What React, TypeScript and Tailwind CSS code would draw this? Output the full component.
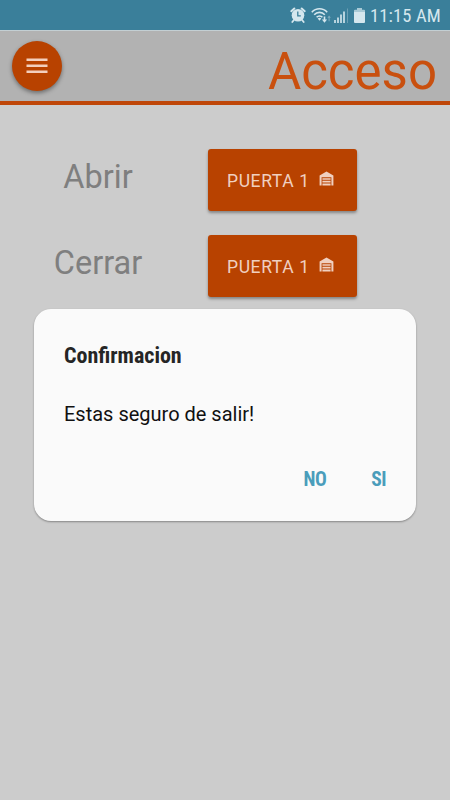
import type { ReactNode } from 'react'

const CONDENSED =
  "font-['Roboto_Condensed','Roboto','Liberation_Sans_Narrow',sans-serif] [font-stretch:75%]"

function AlarmIcon() {
  return (
    <svg width="16" height="16" viewBox="0 0 16 16" fill="none">
      <path
        d="M3.9 13l-1.6 2M12.1 13l1.6 2"
        stroke="#d5e7ee"
        strokeWidth="1.8"
        strokeLinecap="round"
      />
      <path
        d="M1.3 4.2l3-2.7M14.7 4.2l-3-2.7"
        stroke="#d5e7ee"
        strokeWidth="2"
        strokeLinecap="round"
      />
      <circle cx="8" cy="8.2" r="6.3" fill="#d5e7ee" />
      <path d="M7.8 4.6v4.2h3" stroke="#3a7f9a" strokeWidth="1.3" />
    </svg>
  )
}

function WifiIcon() {
  return (
    <svg width="20" height="16" viewBox="0 0 20 16" fill="none">
      <g stroke="#d5e7ee" strokeWidth="1.6">
        <path d="M0.8 5.2C5 0.6 12 0.6 16.2 5.2" />
        <path d="M3.2 7.8C6 4.6 11 4.6 13.8 7.8" />
        <path d="M5.6 10.3C7.3 8.5 9.8 8.5 11.4 10.3" />
      </g>
      <path d="M6.7 11.6Q8.5 10 10.3 11.6L8.5 13.8z" fill="#d5e7ee" />
      <path d="M12.7 9.6v3h-1.8L13.5 15.8l2.6-3.2h-1.8v-3z" fill="#d5e7ee" />
      <path d="M17.6 14.2v-3.4h-1.2l1.7-2.2 1.7 2.2h-1.2v3.4z" fill="#7fadbf" />
    </svg>
  )
}

function SignalIcon() {
  return (
    <svg width="15" height="15" viewBox="0 0 15 15">
      <rect x="0" y="12" width="2" height="3" fill="#b7d3de" />
      <rect x="3" y="9.5" width="2" height="5.5" fill="#b7d3de" />
      <rect x="6" y="6.5" width="2" height="8.5" fill="#b7d3de" />
      <rect x="9" y="3.5" width="2" height="11.5" fill="#b7d3de" />
      <rect x="13" y="0.5" width="1" height="14.5" fill="#6c9fb4" />
    </svg>
  )
}

function BatteryIcon() {
  return (
    <svg width="11" height="15" viewBox="0 0 11 15">
      <path d="M3 0h5v1.8h2a1 1 0 0 1 1 1V4H0V2.8a1 1 0 0 1 1-1h2z" fill="#a9cad6" />
      <path d="M0 4h11v10a1 1 0 0 1-1 1H1a1 1 0 0 1-1-1z" fill="#d5e7ee" />
    </svg>
  )
}

function GarageIcon() {
  return (
    <svg width="15" height="15" viewBox="0 0 15 15">
      <path d="M0.6 14.6V4.4L7.5 0.6l6.9 3.8v10.2h-2V6.2H2.6v8.4z" fill="#f0d0c0" />
      <path
        d="M3.4 7.3h8.2v1.5H3.4zM3.4 9.8h8.2v1.7H3.4zM3.4 12.4h8.2v2.2H3.4z"
        fill="#f0d0c0"
      />
    </svg>
  )
}

function StatusBar() {
  return (
    <div className="flex h-[30px] items-center bg-[#3a7f9a] pl-[290px]">
      <AlarmIcon />
      <div className="ml-[5px]">
        <WifiIcon />
      </div>
      <div className="ml-[3px]">
        <SignalIcon />
      </div>
      <div className="ml-[5px]">
        <BatteryIcon />
      </div>
      <span
        className={`${CONDENSED} ml-[5px] pt-[1px] text-[18.5px] leading-6 tracking-[0.15px] whitespace-nowrap text-[#d5e7ee]`}
      >
        11:15 AM
      </span>
    </div>
  )
}

function DoorRow({ label }: { label: string }) {
  return (
    <div className="flex h-[62px] items-center">
      <div className="w-[196px] pb-[6px] text-center text-[32.5px] leading-none text-[#7f7f7f]">
        {label}
      </div>
      <button
        type="button"
        className="ml-[12px] flex h-[62px] w-[149px] items-center rounded-[3px] bg-[#b84200] pl-[19px] shadow-[0_2px_3px_rgba(0,0,0,0.35)]"
      >
        <span className="pt-[2px] text-[17.5px] tracking-[0.6px] whitespace-nowrap text-[#f0d0c0]">
          PUERTA 1
        </span>
        <span className="ml-[9px] pb-[4px]">
          <GarageIcon />
        </span>
      </button>
    </div>
  )
}

function DialogButton({ children }: { children: ReactNode }) {
  return (
    <button
      type="button"
      className={`${CONDENSED} text-[19.5px] leading-6 font-bold tracking-[-0.5px] text-[#4a9dbb]`}
    >
      {children}
    </button>
  )
}

export default function App() {
  return (
    <div className="relative h-[800px] w-[450px] overflow-hidden bg-[#cccccc] font-['Roboto',sans-serif]">
      <StatusBar />
      <header className="flex h-[75px] items-center justify-between border-t border-b-4 border-t-[#c3cfd3] border-b-[#bf4608] bg-[#b2b2b2] pr-[13px] pl-[12px]">
        <button
          type="button"
          className="flex h-[50px] w-[50px] items-center justify-center rounded-full bg-[#b84200] shadow-[0_2px_4px_rgba(0,0,0,0.4)]"
        >
          <svg width="22" height="16" viewBox="0 0 22 16" fill="#f3cfbd">
            <rect x="0.5" y="0.5" width="21" height="2.5" />
            <rect x="0.5" y="6.5" width="21" height="2.5" />
            <rect x="0.5" y="12.5" width="21" height="2.5" />
          </svg>
        </button>
        <h1 className="pt-[10px] text-[51px] leading-none text-[#c9500f]">Acceso</h1>
      </header>

      <main className="flex flex-col gap-[24px] pt-[44px]">
        <DoorRow label="Abrir" />
        <DoorRow label="Cerrar" />
      </main>

      <div
        role="dialog"
        className="absolute top-[309px] left-[34px] flex h-[212px] w-[382px] flex-col rounded-[17px] bg-[#fafafa] px-[30px] shadow-[0_1px_2px_rgba(0,0,0,0.35)]"
      >
        <h2 className={`${CONDENSED} pt-[35px] text-[22px] leading-6 font-bold text-[#252525]`}>
          Confirmacion
        </h2>
        <p className="pt-[34px] text-[20px] leading-6 text-[#111111]">Estas seguro de salir!</p>
        <div className="flex justify-end gap-[45px] pt-[42px]">
          <DialogButton>NO</DialogButton>
          <DialogButton>SI</DialogButton>
        </div>
      </div>
    </div>
  )
}
